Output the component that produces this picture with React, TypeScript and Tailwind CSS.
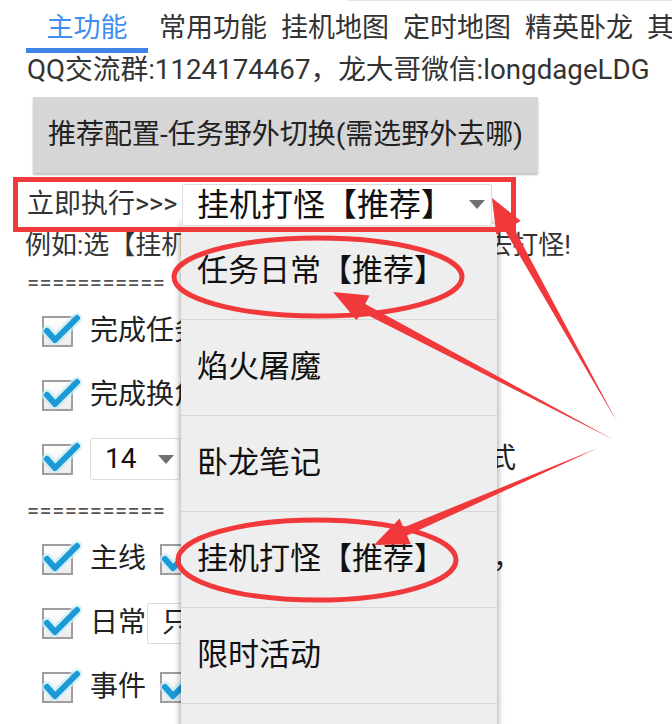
import React from "react";

const RED = "#f1383a";
const FONT = "font-[Roboto,'Noto_Sans_CJK_SC',sans-serif]";

// red annotation arrow: thin tail, thick head
const arrowPoints = (x1: number, y1: number, x2: number, y2: number) => {
  const dx = x2 - x1;
  const dy = y2 - y1;
  const len = Math.hypot(dx, dy);
  const ux = dx / len;
  const uy = dy / len;
  const nx = -uy;
  const ny = ux;
  const L = 34;
  const hw = 14;
  const sw = 4.5;
  const bx = x2 - ux * L;
  const by = y2 - uy * L;
  const pts = [
    [x1, y1],
    [bx + nx * sw, by + ny * sw],
    [bx + nx * hw, by + ny * hw],
    [x2, y2],
    [bx - nx * hw, by - ny * hw],
    [bx - nx * sw, by - ny * sw],
  ];
  return pts.map((p) => p.map((v) => v.toFixed(1)).join(",")).join(" ");
};

const Check = () => (
  <svg width="31" height="31" viewBox="0 0 31 31" overflow="visible" className="shrink-0">
    <defs>
      <linearGradient id="cbg" x1="0" y1="0" x2="0" y2="1">
        <stop offset="0" stopColor="#ffffff" />
        <stop offset="1" stopColor="#ececec" />
      </linearGradient>
    </defs>
    <rect x="1" y="1" width="29" height="29" fill="url(#cbg)" stroke="#9d9d9d" strokeWidth="2" />
    <path d="M5 15 L13 24 L35 2" fill="none" stroke="#c8ecfa" strokeWidth="11" strokeLinejoin="round" strokeLinecap="round" opacity="0.7" />
    <path d="M5 15 L13 24 L35 2" fill="none" stroke="#1b9ad6" strokeWidth="6" strokeLinejoin="round" strokeLinecap="round" />
  </svg>
);

const Caret = () => <span className="w-0 h-0 border-l-[8px] border-r-[8px] border-t-[9px] border-l-transparent border-r-transparent border-t-[#707070]" />;

const tabs = ["常用功能", "挂机地图", "定时地图", "精英卧龙", "其他设置"];
const menuItems = ["任务日常【推荐】", "焰火屠魔", "卧龙笔记", "挂机打怪【推荐】", "限时活动", "其他"];

const App = () => {
  return (
    <div className={`relative w-[672px] h-[724px] overflow-hidden bg-white text-[#222] ${FONT}`}>
      <div className="h-px w-[325px] ml-auto bg-[#e4e4e4]" />

      {/* tabs */}
      <div className="flex items-start pt-[12px] whitespace-nowrap">
        <div className="ml-[26px] w-[122px] shrink-0 flex flex-col items-center">
          <span className="text-[27px] leading-[30px] text-[#3f8ef2]">主功能</span>
          <span className="mt-[5px] w-full h-[5px] bg-[#3f84e8]" />
        </div>
        <div className="flex gap-[14px] ml-[11px]">
          {tabs.map((t) => (
            <span key={t} className="text-[27px] leading-[30px] text-[#333]">
              {t}
            </span>
          ))}
        </div>
      </div>

      <p className="mt-[2px] px-[27px] text-[27.7px] leading-[30px] text-[#333] whitespace-nowrap">QQ交流群:1124174467，龙大哥微信:longdageLDG</p>

      <div className="mt-[12px] ml-[33px] w-[505px] h-[76px] bg-[#d6d6d6] shadow-[0_2px_2px_rgba(0,0,0,0.25)] flex items-center justify-center text-[28px] text-[#222] whitespace-nowrap">
        推荐配置-任务野外切换(需选野外去哪)
      </div>

      {/* run now row, boxed in red */}
      <div className="relative z-20 mt-[4px] ml-[13px] w-[503px] h-[55px] border-[5px] flex items-center pl-[9px]" style={{ borderColor: RED }}>
        <span className="w-[155px] shrink-0 text-[27px] leading-none text-[#333] whitespace-nowrap">立即执行&gt;&gt;&gt;</span>
        <div className="w-[310px] h-[42px] bg-white border border-[#dcdcdc] rounded-[2px] flex items-center justify-between pl-[14px] pr-[6px]">
          <span className="text-[32px] leading-none text-[#111] whitespace-nowrap">挂机打怪【推荐】</span>
          <Caret />
        </div>
      </div>

      <p className="px-[25px] text-[26px] leading-[26px] text-[#333] whitespace-nowrap">例如:选【挂机打怪【推荐】】后点击就会去打怪!</p>

      <p className="mt-[12px] px-[27px] text-[22px] leading-[26px] text-[#555] tracking-[0.5px]">===========</p>

      <div className="mt-[3px] whitespace-nowrap">
        <div className="h-[64px] flex items-center pl-[42px]">
          <Check />
          <span className="ml-[17px] text-[28px]">完成任务后切换挂机打怪</span>
        </div>
        <div className="h-[64px] flex items-center pl-[42px]">
          <Check />
          <span className="ml-[17px] text-[28px]">完成换角色后自动执行</span>
        </div>
        <div className="h-[64px] flex items-center pl-[42px]">
          <Check />
          <div className="ml-[17px] w-[90px] h-[42px] border border-[#dcdcdc] rounded-[2px] flex items-center justify-between pl-[14px] pr-[5px]">
            <span className="text-[28px] leading-none text-[#111]">14</span>
            <Caret />
          </div>
          <span className="ml-0 text-[28px]">分钟后切换到挂机打怪模式</span>
        </div>
      </div>

      <p className="mt-[7px] px-[27px] text-[22px] leading-[26px] text-[#555] tracking-[0.5px]">===========</p>

      <div className="mt-[3px] whitespace-nowrap">
        <div className="h-[64px] flex items-center pl-[42px]">
          <Check />
          <span className="ml-[17px] text-[28px]">主线</span>
          <span className="ml-[14px]">
            <Check />
          </span>
          <span className="ml-[22px] text-[28px]">支线任务自动接取完成，</span>
        </div>
        <div className="h-[64px] flex items-center pl-[42px]">
          <Check />
          <span className="ml-[17px] text-[28px]">日常</span>
          <div className="ml-[1px] w-[200px] h-[41px] border border-[#dcdcdc] rounded-[2px] flex items-center pl-[14px]">
            <span className="text-[28px] leading-none">只做日常</span>
          </div>
        </div>
        <div className="h-[64px] flex items-center pl-[42px]">
          <Check />
          <span className="ml-[17px] text-[28px]">事件</span>
          <span className="ml-[14px]">
            <Check />
          </span>
          <span className="ml-[20px] text-[28px]">自动</span>
        </div>
      </div>

      {/* open dropdown */}
      <div className="absolute z-10 left-[181px] top-[224px] w-[316px] bg-[#eeeeee] shadow-[0_0_7px_rgba(0,0,0,0.45)]">
        {menuItems.map((m) => (
          <div key={m} className="h-[96px] border-b border-[#d6d6d6] flex items-center pl-[16px] text-[31px] text-[#111] whitespace-nowrap">
            {m}
          </div>
        ))}
      </div>

      {/* red annotations */}
      <svg className="absolute inset-0 z-30 pointer-events-none" width="672" height="724" viewBox="0 0 672 724">
        <ellipse cx="318" cy="277" rx="144" ry="39" fill="none" stroke={RED} strokeWidth="5" />
        <ellipse cx="317" cy="560" rx="139" ry="40" fill="none" stroke={RED} strokeWidth="5" />
        <polygon points={arrowPoints(617, 422, 492, 198)} fill={RED} />
        <polygon points={arrowPoints(614, 440, 333, 292)} fill={RED} />
        <polygon points={arrowPoints(598, 448, 374, 545)} fill={RED} />
      </svg>
    </div>
  );
};

export default App;
